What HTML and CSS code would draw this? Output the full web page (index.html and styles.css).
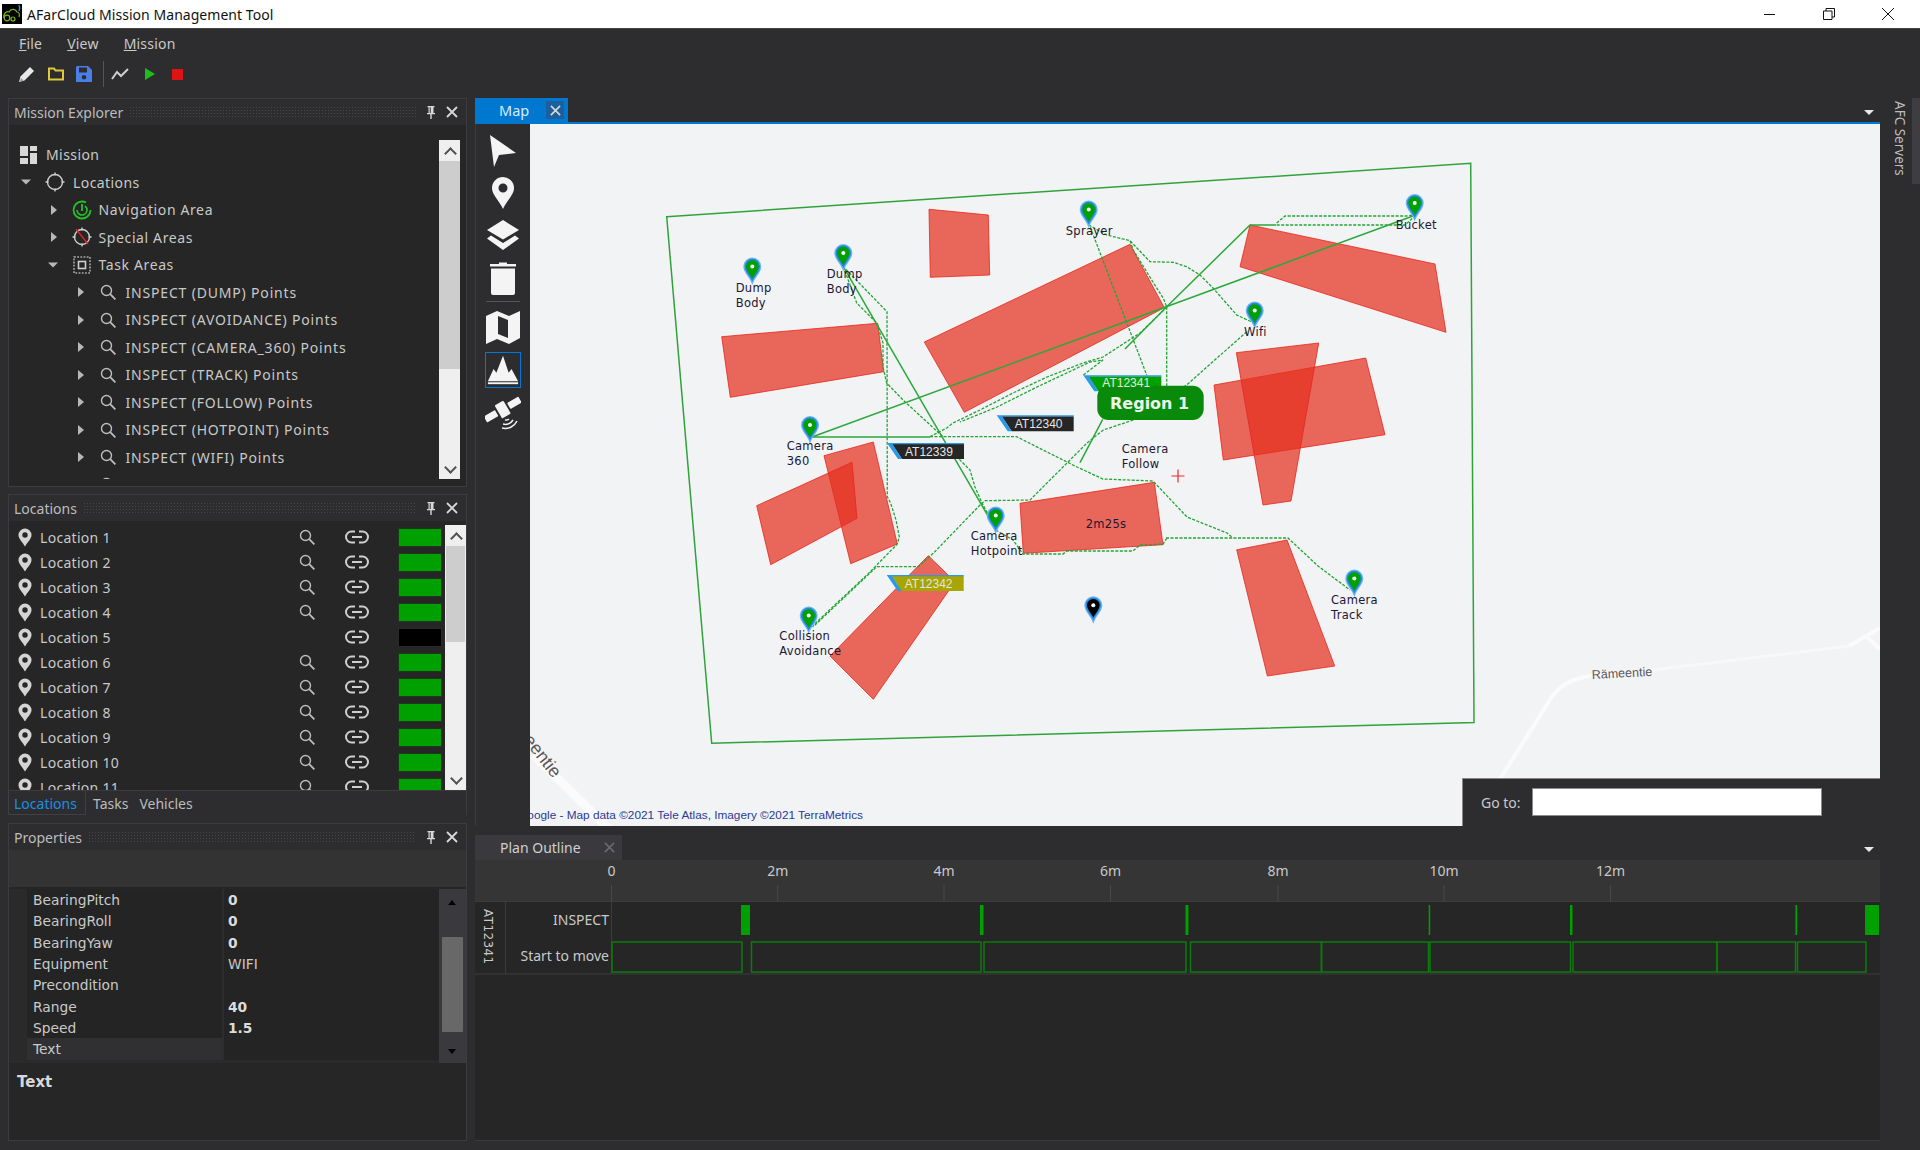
FILE: index.html
```html
<!DOCTYPE html>
<html lang="en">
<head>
<meta charset="utf-8">
<title>AFarCloud Mission Management Tool</title>
<link rel="stylesheet" href="styles.css">
</head>
<body>
<svg class="sprite" xmlns="http://www.w3.org/2000/svg">
  <symbol id="i-search" viewBox="0 0 16 16"><circle cx="6.5" cy="6.5" r="5" fill="none" stroke="#bdbdbd" stroke-width="1.4"/><path d="M10.2 10.2L15.4 15.4" stroke="#bdbdbd" stroke-width="1.8"/></symbol>
  <symbol id="i-link" viewBox="0 0 24 14"><path d="M10 1.5H6.5a5.5 5.5 0 0 0 0 11H10M14 1.5h3.500a5.500 5.500 0 0 1 0 11H14M7 7h10" fill="none" stroke="#cfcfcf" stroke-width="2"/></symbol>
  <symbol id="i-pin" viewBox="0 0 14 19"><path fill-rule="evenodd" fill="#d4d4d4" d="M7 .5A6.500 6.500 0 0 0 .5 7C.5 11 4.500 14 7 18.500 9.500 14 13.500 11 13.500 7A6.500 6.500 0 0 0 7 .5zM7 4.300a2.700 2.700 0 1 1 0 5.400 2.700 2.700 0 0 1 0-5.400z"/></symbol>
  <symbol id="i-right" viewBox="0 0 14 14"><path d="M4 2l6 5-6 5z" fill="#b8b8b8"/></symbol>
  <symbol id="i-down" viewBox="0 0 14 14"><path d="M1 4.500h10l-5 5z" fill="#b8b8b8"/></symbol>
  <symbol id="i-scope" viewBox="0 0 20 20"><circle cx="10" cy="10" r="7.500" fill="none" stroke="#cfcfcf" stroke-width="1.400"/><path d="M10 .5v3M10 16.500v3M.5 10h3M16.500 10h3" stroke="#cfcfcf" stroke-width="1.400"/></symbol>
  <symbol id="i-pinpanel" viewBox="0 0 10 14"><path d="M1.500 1h7v1.200H7.500v5.800H9v1.200H5.700V14H4.300V9.200H1V8h1.500V2.200H1.500z M3.700 2.200V8h1V2.200z" fill="#d8d8d8" fill-rule="evenodd"/></symbol>
  <symbol id="i-x" viewBox="0 0 12 12"><path d="M1 1l10 10M11 1L1 11" stroke="#d8d8d8" stroke-width="1.800"/></symbol>
</svg>

<header class="titlebar">
  <svg class="app-icon" viewBox="0 0 20 20"><rect width="20" height="20" fill="#000"/><path d="M2 14c-1-5 3-7 5-6 2-4 7-3 8 0 2 0 3 2 2 5" fill="none" stroke="#7fb51d" stroke-width="1.200"/><circle cx="5" cy="14" r="2.800" fill="none" stroke="#7fb51d" stroke-width="1.200"/><circle cx="11" cy="15" r="2" fill="none" stroke="#7fb51d" stroke-width="1.200"/><path d="M17 1c1 2 1 4 0 6" stroke="#1e9be8" stroke-width="1.500" fill="none"/></svg>
  <span class="app-title">AFarCloud Mission Management Tool</span>
  <div class="win-controls">
    <svg class="win-btn" viewBox="0 0 12 12"><path d="M0 6.500h11" stroke="#111" stroke-width="1"/></svg>
    <svg class="win-btn" viewBox="0 0 12 12"><path d="M.5 3h8.500v8.500H.5zM3 3V.5h8.500V9H9" fill="none" stroke="#111" stroke-width="1"/></svg>
    <svg class="win-btn" viewBox="0 0 12 12"><path d="M0 0l12 12M12 0L0 12" stroke="#111" stroke-width="1"/></svg>
  </div>
</header>

<nav class="menubar">
  <span class="menu-item"><u>F</u>ile</span>
  <span class="menu-item"><u>V</u>iew</span>
  <span class="menu-item"><u>M</u>ission</span>
</nav>

<div class="toolbar">
  <svg class="tool" viewBox="0 0 16 16"><path d="M0 16l1.500-5.500L11 1l4 4-9.500 9.500z" fill="#e8e8e8"/><path d="M1 15.500l1-3.500 2.500 2.500z" fill="#999"/></svg>
  <svg class="tool" viewBox="0 0 16 16"><path d="M1 13.500V2.500h5l1.500 2H15v9z" fill="none" stroke="#e0c93a" stroke-width="2"/></svg>
  <svg class="tool" viewBox="0 0 16 16"><path fill-rule="evenodd" fill="#4a7fe8" d="M1 0h11l4 4v12H0V1zM3 1.500v5h8v-5zM8 9a2.300 2.300 0 1 0 0 4.600A2.300 2.300 0 0 0 8 9z"/></svg>
  <span class="tool-sep"></span>
  <svg class="tool tool-wide" viewBox="0 0 18 12"><path d="M1 11l5-7 4 4 7-7" fill="none" stroke="#d0d0d0" stroke-width="2"/></svg>
  <svg class="tool tool-play" viewBox="0 0 10 12"><path d="M0 0l10 6-10 6z" fill="#1cc01c"/></svg>
  <svg class="tool tool-stop" viewBox="0 0 10 10"><rect width="10" height="10" fill="#dc1414"/></svg>
</div>

<main class="workspace">
  <div class="sidebar">
    <section class="panel panel-explorer">
      <div class="panel-title"><span>Mission Explorer</span><i class="grip"></i><svg class="ptool-pin"><use href="#i-pinpanel"/></svg><svg class="ptool-x"><use href="#i-x"/></svg></div>
      <div class="explorer-body">
        <ul class="tree">
          <li class="node l0"><svg class="node-icon" viewBox="0 0 20 20"><path d="M2 1h8v10H2zM12 1h7v5h-7zM12 8h7v11h-7zM2 13h8v6H2z" fill="#d8d8d8"/></svg><span class="node-text">Mission</span></li>
          <li class="node l1"><svg class="twist"><use href="#i-down"/></svg><svg class="node-icon"><use href="#i-scope"/></svg><span class="node-text">Locations</span></li>
          <li class="node l2"><svg class="twist"><use href="#i-right"/></svg><svg class="node-icon" viewBox="0 0 20 20"><circle cx="10" cy="10" r="8.500" fill="none" stroke="#25c025" stroke-width="1.800" stroke-dasharray="44 10"/><path d="M5 10a5 5 0 1 0 8-4" fill="none" stroke="#25c025" stroke-width="1.600"/><path d="M10 4v7" stroke="#25c025" stroke-width="1.800"/></svg><span class="node-text">Navigation Area</span></li>
          <li class="node l2"><svg class="twist"><use href="#i-right"/></svg><svg class="node-icon" viewBox="0 0 20 20"><use href="#i-scope"/><path d="M4 2l12 15" stroke="#e02020" stroke-width="1.400"/></svg><span class="node-text">Special Areas</span></li>
          <li class="node l2"><svg class="twist"><use href="#i-down"/></svg><svg class="node-icon" viewBox="0 0 20 20"><rect x="2" y="2" width="16" height="16" fill="none" stroke="#aaa" stroke-width="1.600" stroke-dasharray="1.800 1.400"/><rect x="6.500" y="6.500" width="7" height="7" fill="none" stroke="#d0d0d0" stroke-width="1.600"/></svg><span class="node-text">Task Areas</span></li>
          <li class="node l3"><svg class="twist"><use href="#i-right"/></svg><svg class="node-icon small"><use href="#i-search"/></svg><span class="node-text">INSPECT (DUMP) Points</span></li>
          <li class="node l3"><svg class="twist"><use href="#i-right"/></svg><svg class="node-icon small"><use href="#i-search"/></svg><span class="node-text">INSPECT (AVOIDANCE) Points</span></li>
          <li class="node l3"><svg class="twist"><use href="#i-right"/></svg><svg class="node-icon small"><use href="#i-search"/></svg><span class="node-text">INSPECT (CAMERA_360) Points</span></li>
          <li class="node l3"><svg class="twist"><use href="#i-right"/></svg><svg class="node-icon small"><use href="#i-search"/></svg><span class="node-text">INSPECT (TRACK) Points</span></li>
          <li class="node l3"><svg class="twist"><use href="#i-right"/></svg><svg class="node-icon small"><use href="#i-search"/></svg><span class="node-text">INSPECT (FOLLOW) Points</span></li>
          <li class="node l3"><svg class="twist"><use href="#i-right"/></svg><svg class="node-icon small"><use href="#i-search"/></svg><span class="node-text">INSPECT (HOTPOINT) Points</span></li>
          <li class="node l3"><svg class="twist"><use href="#i-right"/></svg><svg class="node-icon small"><use href="#i-search"/></svg><span class="node-text">INSPECT (WIFI) Points</span></li>
          <li class="node l3"><svg class="twist"><use href="#i-right"/></svg><svg class="node-icon small"><use href="#i-search"/></svg><span class="node-text">INSPECT (SPRAY) Points</span></li>
        </ul>
        <div class="scroll-light scroll-explorer"><span class="sb-up"></span><span class="sb-thumb thumb-explorer"></span><i class="sb-fill"></i><span class="sb-down"></span></div>
      </div>
    </section>

    <section class="panel panel-locations">
      <div class="panel-title"><span>Locations</span><i class="grip"></i><svg class="ptool-pin"><use href="#i-pinpanel"/></svg><svg class="ptool-x"><use href="#i-x"/></svg></div>
      <div class="locations-body">
        <div class="loc-list">
          <div class="loc-row"><svg class="loc-pin"><use href="#i-pin"/></svg><span>Location 1</span><svg class="loc-search"><use href="#i-search"/></svg><svg class="loc-link"><use href="#i-link"/></svg><i class="swatch ok"></i></div>
          <div class="loc-row"><svg class="loc-pin"><use href="#i-pin"/></svg><span>Location 2</span><svg class="loc-search"><use href="#i-search"/></svg><svg class="loc-link"><use href="#i-link"/></svg><i class="swatch ok"></i></div>
          <div class="loc-row"><svg class="loc-pin"><use href="#i-pin"/></svg><span>Location 3</span><svg class="loc-search"><use href="#i-search"/></svg><svg class="loc-link"><use href="#i-link"/></svg><i class="swatch ok"></i></div>
          <div class="loc-row"><svg class="loc-pin"><use href="#i-pin"/></svg><span>Location 4</span><svg class="loc-search"><use href="#i-search"/></svg><svg class="loc-link"><use href="#i-link"/></svg><i class="swatch ok"></i></div>
          <div class="loc-row"><svg class="loc-pin"><use href="#i-pin"/></svg><span>Location 5</span><b class="no-search"></b><svg class="loc-link"><use href="#i-link"/></svg><i class="swatch off"></i></div>
          <div class="loc-row"><svg class="loc-pin"><use href="#i-pin"/></svg><span>Location 6</span><svg class="loc-search"><use href="#i-search"/></svg><svg class="loc-link"><use href="#i-link"/></svg><i class="swatch ok"></i></div>
          <div class="loc-row"><svg class="loc-pin"><use href="#i-pin"/></svg><span>Location 7</span><svg class="loc-search"><use href="#i-search"/></svg><svg class="loc-link"><use href="#i-link"/></svg><i class="swatch ok"></i></div>
          <div class="loc-row"><svg class="loc-pin"><use href="#i-pin"/></svg><span>Location 8</span><svg class="loc-search"><use href="#i-search"/></svg><svg class="loc-link"><use href="#i-link"/></svg><i class="swatch ok"></i></div>
          <div class="loc-row"><svg class="loc-pin"><use href="#i-pin"/></svg><span>Location 9</span><svg class="loc-search"><use href="#i-search"/></svg><svg class="loc-link"><use href="#i-link"/></svg><i class="swatch ok"></i></div>
          <div class="loc-row"><svg class="loc-pin"><use href="#i-pin"/></svg><span>Location 10</span><svg class="loc-search"><use href="#i-search"/></svg><svg class="loc-link"><use href="#i-link"/></svg><i class="swatch ok"></i></div>
          <div class="loc-row"><svg class="loc-pin"><use href="#i-pin"/></svg><span>Location 11</span><svg class="loc-search"><use href="#i-search"/></svg><svg class="loc-link"><use href="#i-link"/></svg><i class="swatch ok"></i></div>
        </div>
        <div class="scroll-light scroll-locations"><span class="sb-up"></span><span class="sb-thumb thumb-locations"></span><i class="sb-fill"></i><span class="sb-down"></span></div>
      </div>
    </section>
    <div class="panel-tabs"><span class="ptab active">Locations</span><span class="ptab">Tasks</span><span class="ptab">Vehicles</span></div>

    <section class="panel panel-properties">
      <div class="panel-title"><span>Properties</span><i class="grip"></i><svg class="ptool-pin"><use href="#i-pinpanel"/></svg><svg class="ptool-x"><use href="#i-x"/></svg></div>
      <div class="props-strip"></div>
      <div class="props-body">
        <div class="props-grid">
          <div class="prop-row"><span class="prop-name">BearingPitch</span><span class="prop-val strong">0</span></div>
          <div class="prop-row"><span class="prop-name">BearingRoll</span><span class="prop-val strong">0</span></div>
          <div class="prop-row"><span class="prop-name">BearingYaw</span><span class="prop-val strong">0</span></div>
          <div class="prop-row"><span class="prop-name">Equipment</span><span class="prop-val">WIFI</span></div>
          <div class="prop-row"><span class="prop-name">Precondition</span><span class="prop-val"></span></div>
          <div class="prop-row"><span class="prop-name">Range</span><span class="prop-val strong">40</span></div>
          <div class="prop-row"><span class="prop-name">Speed</span><span class="prop-val strong">1.5</span></div>
          <div class="prop-row selected"><span class="prop-name">Text</span><span class="prop-val"></span></div>
        </div>
        <div class="scroll-dark"><span class="sd-up"></span><span class="sd-thumb"></span><span class="sd-down"></span></div>
      </div>
      <div class="props-desc">Text</div>
    </section>
  </div>

  <div class="center">
    <section class="doc-map">
      <div class="doc-strip">
        <div class="doc-tab active"><span>Map</span><span class="doc-close"><svg class="doc-x"><use href="#i-x"/></svg></span></div>
        <i class="doc-drop"></i>
      </div>
      <div class="map-wrap">
        <div class="map-tools">
          <svg class="mtool" viewBox="0 0 36 36"><path d="M5 3l26 18-17 2-5 12z" fill="#f4f4f4"/></svg>
          <svg class="mtool" viewBox="0 0 36 36"><path fill-rule="evenodd" fill="#f4f4f4" d="M18 2A11 11 0 0 0 7 13c0 7 7 12 11 21 4-9 11-14 11-21A11 11 0 0 0 18 2zm0 6.500a4.500 4.500 0 1 1 0 9 4.500 4.500 0 0 1 0-9z"/></svg>
          <svg class="mtool" viewBox="0 0 36 36"><path d="M18 3l16 10-16 9.500L2 13z" fill="#f4f4f4"/><path d="M6 18.500l12 7.500 12-7.500 4 3L18 33 2 21.500z" fill="#f4f4f4"/></svg>
          <svg class="mtool" viewBox="0 0 36 36"><path d="M5 4h9V2.500h8V4h9v2.500H5zM6 8.500h24V33a2 2 0 0 1-2 2H8a2 2 0 0 1-2-2z" fill="#f4f4f4"/></svg>
          <i class="mtool-sep"></i>
          <svg class="mtool" viewBox="0 0 36 36"><path fill-rule="evenodd" fill="#f4f4f4" d="M1 7l11-5 12 5 11-5v27l-11 6-12-5-11 5zM13 7v18l10 4V11z"/></svg>
          <div class="mtool-active"><svg class="mtool-in" viewBox="0 0 36 36"><path d="M2 30l6-13 3 4 7-18 6 18 3-4 7 13z" fill="#f4f4f4"/><rect x="2" y="31" width="32" height="2" fill="#f4f4f4"/></svg></div>
          <svg class="mtool" viewBox="0 0 36 36"><g fill="#f4f4f4" transform="rotate(-30 18 15)"><rect x="13" y="7" width="10" height="15" rx="1"/><rect x="-2" y="11" width="13" height="7" rx="1"/><rect x="25" y="11" width="13" height="7" rx="1"/></g><path d="M20 25a5 5 0 0 0 4-1M18 29a9 9 0 0 0 10-4M17 33a13 13 0 0 0 15-7" fill="none" stroke="#f4f4f4" stroke-width="1.500"/></svg>
        </div>
        <div class="map-view">
          <svg class="map-canvas" viewBox="530 124 1350 702" xmlns="http://www.w3.org/2000/svg">
            <defs>
              <g id="mappin"><path d="M0 13.500C-2 9-7 5-7 0A7 7 0 1 1 7 0C7 5 2 9 0 13.500z" fill="none" stroke="#6db4f0" stroke-width="4"/><path d="M0 13.500C-2 9-7 5-7 0A7 7 0 1 1 7 0C7 5 2 9 0 13.500z" stroke="#1f88e0" stroke-width="1.400"/><circle r="2" fill="#fff"/></g>
            </defs>
            <g class="roads">
              <path class="road-wide" d="M534 755L612 832"/>
              <path d="M1500 779L1553 695Q1565 680 1589 676L1615 673"/>
              <path class="road-faint" d="M1615 673L1653 670L1849 646"/>
              <path d="M1849 646L1880 628"/>
              <path d="M1867 637L1880 649"/>
            </g>
            <text class="road-name" transform="translate(1592 679) rotate(-3)">Rämeentie</text>
            <text class="road-name road-big" transform="translate(553 779) rotate(52)" text-anchor="end">Rämeentie</text>
            <polygon class="region" points="666.700,216.700 1470.700,163.300 1474,722.500 711.700,743.300"/>
            <g class="zones">
              <polygon points="929,209.300 988.300,215 989.700,275 930.300,277.300"/>
              <polygon points="721.700,336.700 877.700,323.300 883.700,371.700 730.300,397.300"/>
              <polygon points="924.300,342 1130,244.300 1164.300,307.700 964.300,412.300"/>
              <polygon points="1250,225 1435,264 1446,332.300 1240,266.700"/>
              <polygon points="1214,385 1365.700,358 1385,434.700 1223.300,460"/>
              <polygon points="1236.300,352.700 1318.700,343 1291,501 1263,505"/>
              <polygon points="1020,503.300 1154.300,482.300 1163,544.700 1023.300,553.300"/>
              <polygon points="824,455.700 873.300,442 897.300,544 850.700,563.700"/>
              <polygon points="756.700,505.700 852,462.300 857,518.300 770.700,564.700"/>
              <polygon points="928.300,555.700 955,581.700 873.300,699.300 830,656"/>
              <polygon points="1236.700,549.800 1287,540 1334.700,666 1267.400,676"/>
            </g>
            <g class="routes-dashed">
              <path d="M1088.700 223L1146.700 375"/>
              <path d="M1166.700 306.700V386.700"/>
              <path d="M1088.700 225L1106.700 235L1130 240.700L1150 261.700L1173.300 262.300L1186.700 266.700L1200 275L1213.300 288.300L1236.700 315L1254.700 323.300"/>
              <path d="M1130 240.700L1133.300 250L1151.700 280L1163.300 298.300L1166.700 306.700"/>
              <path d="M1246.700 331.700L1186.700 385L1133.300 420L1103.300 430L1086.700 443.300L1068.300 461.700L1030 500L985 500.700L980 505L933.300 553.300L918.300 566.700L876.700 566.700L813.300 626.700"/>
              <path d="M811.700 626.700L870 572L897.300 544L899.300 536.700L896 520L890.700 503.300L887.300 496.700L887 311.700L843.300 266.700"/>
              <path d="M843.300 266.700L856.700 303L876.700 323L883 343L883 367L886.700 383L903 400L943.300 437"/>
              <path d="M930 436.700L946.700 428L953 423L980 410L1013 393L1047 377L1083 363L1103 357L1140 333L1167 307"/>
              <path d="M1083.300 375L1103 360L1090 362L1037 387L997 407L960 422"/>
              <path d="M930 436.700H1016.700L1043 450L1077 467L1103 479L1153 481L1187 517L1227 533L1233 538"/>
              <path d="M1166 538H1288L1318 566L1350 590"/>
              <path d="M995.700 530L1013 540L1023 554H1063L1067 551H1133L1140 545L1163 544L1167 538"/>
              <path d="M953 453L970 470L975 487L982 503L995.700 528"/>
              <path d="M1276.700 225H1405L1414 217"/>
              <path d="M1276.700 223L1285 216H1406.700L1414 215"/>
            </g>
            <g class="routes-solid">
              <path d="M812 437L1413 216"/>
              <path d="M812 437H930"/>
              <path d="M843.300 266.700L995 528"/>
              <path d="M1276 225H1250L1166.700 306.700L1125 349"/>
              <path d="M1102.700 419.300L1080 462.700"/>
            </g>
            <g class="pins pin-ok">
              <use href="#mappin" x="752.300" y="266.500"/>
              <use href="#mappin" x="843.300" y="253"/>
              <use href="#mappin" x="810" y="425"/>
              <use href="#mappin" x="1088.700" y="209.500"/>
              <use href="#mappin" x="1414.700" y="203"/>
              <use href="#mappin" x="1254.700" y="310.500"/>
              <use href="#mappin" x="995.700" y="515.500"/>
              <use href="#mappin" x="808.700" y="615.500"/>
              <use href="#mappin" x="1354.300" y="578.500"/>
            </g>
            <g class="pins pin-off"><use href="#mappin" x="1093.300" y="605.300"/></g>
            <g class="labels">
              <text x="735.700" y="291.700">Dump</text><text x="735.700" y="306.700">Body</text>
              <text x="826.700" y="277.700">Dump</text><text x="826.700" y="292.700">Body</text>
              <text x="786.700" y="450">Camera</text><text x="786.700" y="465">360</text>
              <text x="1065.700" y="235">Sprayer</text>
              <text x="1395.700" y="229">Bucket</text>
              <text x="1244" y="336">Wifi</text>
              <text x="1121.700" y="452.700">Camera</text><text x="1121.700" y="467.700">Follow</text>
              <text x="970.700" y="540">Camera</text><text x="970.700" y="555">Hotpoint</text>
              <text x="779.300" y="640">Collision</text><text x="779.300" y="655">Avoidance</text>
              <text x="1331" y="604">Camera</text><text x="1331" y="619">Track</text>
              <text x="1085.700" y="528">2m25s</text>
            </g>
            <g class="tag tag-dark" transform="translate(887 443)"><polygon class="tag-fill" points="5,1 77,1 77,16 15,16"/><polygon class="tag-edge" points="0,0 77,0 77,1.200 5.500,1.200 15,16 11,16"/><text x="18" y="12.500">AT12339</text></g>
            <g class="tag tag-dark" transform="translate(996.700 415.300)"><polygon class="tag-fill" points="5,1 77,1 77,16 15,16"/><polygon class="tag-edge" points="0,0 77,0 77,1.200 5.500,1.200 15,16 11,16"/><text x="18" y="12.500">AT12340</text></g>
            <g class="tag tag-green" transform="translate(1083.300 375.300)"><polygon class="tag-fill" points="5,1 78,1 78,16 15,16"/><polygon class="tag-edge" points="0,0 78,0 78,1.200 5.500,1.200 15,16 11,16"/></g>
            <g class="tag tag-olive" transform="translate(886.700 575)"><polygon class="tag-fill" points="5,1 77,1 77,16 15,16"/><polygon class="tag-edge" points="0,0 77,0 77,1.200 5.500,1.200 15,16 11,16"/><text x="18" y="12.500">AT12342</text></g>
            <rect class="region-badge" x="1097.300" y="385.700" width="106.400" height="34.300" rx="11"/>
            <g class="tag"><text x="1102.300" y="387.300">AT12341</text></g>
            <text class="region-text" x="1110" y="408.500">Region 1</text>
            <path class="cross" d="M1171.500 476H1184.500M1178 469.500V482.500"/>
            <text class="attribution" x="863" y="819" text-anchor="end">Google - Map data ©2021 Tele Atlas, Imagery ©2021 TerraMetrics</text>
          </svg>
          <div class="goto"><label class="goto-label" for="goto-input">Go to:</label><input class="goto-input" id="goto-input" type="text"></div>
        </div>
      </div>
    </section>

    <section class="doc-plan">
      <div class="plan-strip">
        <div class="doc-tab plan-tab"><span>Plan Outline</span><svg class="plan-x"><use href="#i-x"/></svg></div>
        <i class="doc-drop plan-drop"></i>
      </div>
      <svg class="plan-canvas" viewBox="475 860 1405 280" xmlns="http://www.w3.org/2000/svg">
        <rect x="475" y="860" width="1405" height="41" fill="#353535"/>
        <g class="ruler-ticks">
          <path d="M611.500 885V901M777.700 885V901M944 885V901M1110.500 885V901M1278 885V901M1444 885V901M1610.500 885V901"/>
        </g>
        <g class="ruler-labels">
          <text x="611.500" y="876">0</text><text x="777.700" y="876">2m</text><text x="944" y="876">4m</text><text x="1110.500" y="876">6m</text><text x="1278" y="876">8m</text><text x="1444" y="876">10m</text><text x="1610.500" y="876">12m</text>
        </g>
        <path class="plan-lines" d="M475 901.500H1880M475 974H1880M505.500 902V974M611.500 902V974"/>
        <text class="row-title" transform="translate(484 909) rotate(90)">AT12341</text>
        <text class="row-label" x="609" y="925">INSPECT</text>
        <text class="row-label" x="609" y="961">Start to move</text>
        <g class="inspect-bars">
          <rect x="741" y="905" width="9" height="30"/><rect x="980" y="905" width="3.500" height="30"/><rect x="1185.500" y="905" width="3" height="30"/><rect x="1428.700" y="905" width="1.500" height="30"/><rect x="1570" y="905" width="2.500" height="30"/><rect x="1795.400" y="905" width="1.800" height="30"/><rect x="1865" y="905" width="14" height="30"/>
        </g>
        <g class="move-boxes">
          <rect x="612" y="942" width="130" height="30"/><rect x="751.500" y="942" width="229.500" height="30"/><rect x="984" y="942" width="202" height="30"/><rect x="1190.500" y="942" width="131" height="30"/><rect x="1321.500" y="942" width="107" height="30"/><rect x="1430" y="942" width="140.500" height="30"/><rect x="1573" y="942" width="144" height="30"/><rect x="1717" y="942" width="78.500" height="30"/><rect x="1797.500" y="942" width="68.500" height="30"/>
        </g>
      </svg>
    </section>
  </div>

  <aside class="right-dock"><span class="dock-label">AFC Servers</span><i class="dock-strip"></i></aside>
</main>
</body>
</html>
```

FILE: styles.css
```css
* { box-sizing: border-box; }
html, body { margin: 0; padding: 0; }
body {
  width: 1920px; height: 1150px; overflow: hidden;
  background: #2d2d30; color: #c9c9c9;
  font-family: "Noto Sans", "Open Sans", sans-serif; font-size: 14px;
}
.sprite { display: none; }
ul { list-style: none; margin: 0; padding: 0; }
i, b { display: block; }

/* title bar */
.titlebar { height: 29px; background: #fff; display: flex; align-items: center; color: #111; border-bottom: 1px solid #444; }
.app-icon { width: 20px; height: 20px; margin-left: 2px; }
.app-title { margin-left: 5px; font-size: 14px; letter-spacing: .04px; }
.win-controls { margin-left: auto; display: flex; }
.win-btn { width: 12px; height: 12px; margin-right: 47px; margin-top: -1px; }
.win-btn:last-child { margin-right: 26px; }

/* menu + toolbar */
.menubar { height: 29px; display: flex; align-items: center; padding-left: 19px; font-size: 14px; }
.menu-item { margin-right: 25px; letter-spacing: .2px; }
.toolbar { height: 30px; display: flex; align-items: center; padding-left: 19px; padding-top: 2px; }
.tool { width: 16px; height: 16px; margin-right: 12.500px; }
.tool-sep { width: 1px; height: 26px; background: #555; margin: 0 7px 0 -2px; }
.tool-wide { width: 18px; height: 12px; margin-right: 16px; }
.tool-play { width: 10px; height: 12px; margin-right: 17px; }
.tool-stop { width: 11px; height: 11px; margin-right: 0; }

/* workspace */
.workspace { height: 1043px; margin-top: 10px; display: flex; }
.sidebar { width: 475px; padding: 0 8px 0 8px; display: flex; flex-direction: column; }
.panel { background: #262626; border: 1px solid #3b3b40; display: flex; flex-direction: column; }
.panel-explorer { height: 389px; margin-bottom: 7px; }
.panel-locations { height: 296px; border-bottom: none; }
.panel-properties { height: 318px; margin-top: 8px; }
.panel-title { height: 26px; flex: none; background: #2d2d30; display: flex; align-items: center; padding: 0 6px 0 5px; font-size: 14px; color: #bcbcbc; }
.grip { flex: 1; height: 12px; margin: 0 10px 0 6px; background-image: radial-gradient(#47474b 40%, transparent 45%); background-size: 3px 3px; }
.ptool-pin { width: 10px; height: 14px; margin-right: 10px; }
.ptool-x { width: 12px; height: 12px; margin-right: 2px; }

/* tree */
.explorer-body { flex: 1; display: flex; padding: 15px 6px 0 0; height: 0; }
.tree { flex: 1; height: 339px; overflow: hidden; padding-top: 1px; }
.node { height: 27.5px; display: flex; align-items: center; font-size: 14px; letter-spacing: .42px; white-space: nowrap; }
.l0 { padding-left: 9px; }
.l1 { padding-left: 11px; }
.l2 { padding-left: 37.500px; letter-spacing: .62px; }
.l3 { padding-left: 64.500px; letter-spacing: .82px; }
.l2 .node-text { margin-left: -1px; }
.twist { width: 14px; height: 14px; flex: none; }
.node-icon { width: 20px; height: 20px; flex: none; margin-left: 11px; margin-right: 8px; }
.l0 .node-icon { margin-left: 0; }
.node-icon.small { width: 16px; height: 16px; margin-left: 12px; margin-right: 10px; }
.scroll-light { background: #efefef; display: flex; flex-direction: column; flex: none; }
.scroll-explorer { width: 21px; height: 339px; }
.scroll-locations { width: 21px; height: 265px; margin-top: 4px; padding-left: 1px; padding-right: 1px; }
.sb-up, .sb-down { height: 21px; flex: none; position: relative; }
.sb-up::after, .sb-down::after { content: ""; position: absolute; left: 50%; top: 50%; width: 7px; height: 7px; margin: -2px 0 0 -4px; border-left: 2px solid #505050; border-top: 2px solid #505050; transform: rotate(45deg); }
.sb-down::after { margin-top: -6px; transform: rotate(225deg); }
.sb-thumb { background: #cdcdcd; display: block; }
.thumb-explorer { height: 208px; }
.thumb-locations { height: 96px; }
.sb-fill { flex: 1; }

/* locations */
.locations-body { flex: 1; height: 0; display: flex; }
.loc-list { flex: 1; height: 269px; overflow: hidden; padding-top: 3.500px; }
.loc-row { height: 25px; display: grid; grid-template-columns: 31px 251px 32px 68px 51px; align-items: center; font-size: 14px; letter-spacing: .3px; }
.loc-pin { width: 14px; height: 19px; margin-left: 9px; }
.loc-search { width: 16px; height: 16px; justify-self: center; }
.no-search { height: 16px; }
.loc-link { width: 24px; height: 14px; justify-self: center; }
.swatch { width: 44px; height: 19px; margin-left: 7px; border: 1px solid #1a3a1a; }
.swatch.ok { background: #00a000; }
.swatch.off { background: #000; border-color: #2a2a2a; }
.panel-tabs { height: 25px; flex: none; display: flex; border-left: 1px solid #3b3b40; border-right: 1px solid #3b3b40; background: #2d2d30; border-top: 1px solid #3b3b40; }
.ptab { padding: 0 5px; margin-right: 1px; line-height: 25px; font-size: 14px; color: #bcbcbc; }
.ptab.active { color: #1c8ee0; width: 78px; margin: 0 2px 0 -1px; border: 1px solid #3f3f46; border-top: none; padding-left: 5px; line-height: 25px; }

/* properties */
.props-strip { height: 37px; flex: none; background: #333; }
.props-body { margin-top: 2px; height: 174px; flex: none; display: flex; font-family: "DejaVu Sans", sans-serif; font-size: 13.800px; }
.props-grid { flex: 1; padding-left: 18px; background: #2a2a2a; }
.prop-row { height: 21.330px; display: grid; grid-template-columns: 195px 1fr; gap: 2px; background: #2d2d2d; padding-bottom: 1.500px; }
.prop-name, .prop-val { background: #242424; padding-left: 6px; line-height: 22px; white-space: nowrap; color: #c9c9c9; }
.prop-val { padding-left: 4px; }
.prop-val.strong { font-weight: 700; color: #dcdcdc; }
.selected .prop-name { background: #303033; }
.scroll-dark { width: 27px; height: 174px; flex: none; background: #39393e; display: flex; flex-direction: column; align-items: center; position: relative; }
.sd-thumb { width: 21px; height: 95px; background: #686868; margin-top: 48px; border-radius: 1px; }
.sd-up, .sd-down { position: absolute; left: 9px; border-left: 4.500px solid transparent; border-right: 4.500px solid transparent; }
.sd-up { top: 11px; border-bottom: 5px solid #000; }
.sd-down { bottom: 9px; border-top: 5px solid #000; }
.props-desc { font-family: "DejaVu Sans", sans-serif; font-weight: 700; font-size: 15px; padding: 10px 0 0 8px; color: #d8d8d8; }

/* center */
.center { width: 1405px; display: flex; flex-direction: column; flex: none; }
.doc-map { height: 728px; display: flex; flex-direction: column; }
.doc-strip { height: 24px; flex: none; display: flex; }
.doc-tab { width: 93px; display: flex; align-items: center; color: #fff; }
.doc-tab.active { background: #0078d0; padding-left: 24px; font-size: 14.500px; color: #d8ecff; }
.doc-close { width: 18px; height: 18px; margin-left: 17px; background: #1c5f9c; display: flex; align-items: center; justify-content: center; }
.doc-x { width: 11px; height: 11px; }
.doc-drop { margin: 12px 6px 0 auto; width: 0; height: 0; border-left: 5px solid transparent; border-right: 5px solid transparent; border-top: 5px solid #e8e8e8; }
.map-wrap { flex: 1; display: flex; border-top: 2px solid #0078d0; height: 0; }
.map-tools { width: 55px; flex: none; display: flex; flex-direction: column; align-items: center; padding-top: 5px; background: #2d2d30; border-left: 1px solid #3a3a3f; }
.mtool { width: 36px; height: 36px; margin: 3.250px 0; flex: none; }
.mtool-sep { width: 34px; height: 1px; background: #555; margin: 2px 0 3.500px; flex: none; }
.mtool-active { width: 36px; height: 36px; border: 1px solid #0078d7; margin: 4px 0; flex: none; }
.mtool-in { width: 34px; height: 34px; display: block; }
.map-view { flex: 1; position: relative; background: #f2f3f5; overflow: hidden; }
.map-canvas { width: 1350px; height: 702px; display: block; }
.roads path { fill: none; stroke: #fbfbfc; stroke-width: 4; }
.roads .road-wide { stroke-width: 9; }
.roads .road-faint { stroke: #f7f8f9; stroke-width: 3; }
.road-name { font: 12.500px "Liberation Sans", sans-serif; fill: #5c5658; }
.road-big { font-size: 18px; }
.region { fill: none; stroke: #2fa33a; stroke-width: 1.500; }
.zones polygon { fill: #e5301f; fill-opacity: .72; stroke: #e8251a; stroke-width: 1; stroke-opacity: .8; }
.routes-dashed path { fill: none; stroke: #22a533; stroke-width: 1.300; stroke-dasharray: 3 1.500; }
.routes-solid path { fill: none; stroke: #2aa83a; stroke-width: 1.500; }
.pin-ok { fill: #00a000; }
.pin-off { fill: #000; }
.labels text { font: 11.500px "DejaVu Sans", sans-serif; letter-spacing: .3px; fill: #211733; }
.tag text { font: 12px "Liberation Sans", sans-serif; fill: #e4e4e4; }
.tag-dark .tag-fill { fill: #262626; }
.tag-green .tag-fill { fill: #00a000; }
.tag-olive .tag-fill { fill: #a8a400; }
.tag-edge { fill: #2a9ae4; }
.region-badge { fill: #0a8a0a; }
.region-text { font: 700 16px "DejaVu Sans", sans-serif; fill: #eaf6ea; }
.cross { stroke: #ee2b2b; stroke-width: 1.200; fill: none; }
.attribution { font: 11.800px "Liberation Sans", sans-serif; fill: #2c3a96; }
.goto { position: absolute; right: 0; bottom: 0; width: 418px; height: 48px; background: #2d2d30; border-top: 1px solid #888; border-left: 1px solid #888; display: flex; align-items: center; padding-left: 18px; font-size: 14px; }
.goto-label { width: 51px; flex: none; }
.goto-input { width: 290px; height: 28px; background: #fff; border: 1px solid #8a8a8a; padding: 0; margin-top: -2px; }

/* plan */
.doc-plan { margin-top: 9px; height: 306px; display: flex; flex-direction: column; background: #262626; border-bottom: 1px solid #3b3b40; }
.plan-strip { height: 25px; flex: none; display: flex; background: #2d2d30; }
.plan-tab { width: 147px; background: #3a3a3e; padding-left: 25px; color: #cfcfcf; font-size: 14px; }
.plan-x { width: 11px; height: 11px; margin-left: 23px; opacity: .3; }
.plan-drop { margin-top: 12px; }
.plan-canvas { width: 1405px; height: 280px; display: block; flex: none; }
.ruler-ticks path { stroke: #484848; stroke-width: 1; fill: none; }
.ruler-labels text { font: 14px "Noto Sans", sans-serif; fill: #c9c9c9; text-anchor: middle; }
.plan-lines { stroke: #3c3c3c; stroke-width: 1; fill: none; }
.row-title { font: 12px "DejaVu Sans", sans-serif; fill: #c9c9c9; letter-spacing: .4px; }
.row-label { font: 14px "Noto Sans", sans-serif; fill: #c9c9c9; text-anchor: end; }
.inspect-bars rect { fill: #00a000; }
.move-boxes rect { fill: none; stroke: #0c7c0c; stroke-width: 1.500; }

/* right dock */
.right-dock { flex: 1; display: flex; justify-content: flex-end; }
.dock-label { writing-mode: vertical-rl; font-size: 13.500px; height: 86px; margin-right: 3px; color: #bcbcbc; padding-top: 3px; line-height: 18px; }
.dock-strip { width: 8px; height: 86px; background: #3e3e42; flex: none; }
```
